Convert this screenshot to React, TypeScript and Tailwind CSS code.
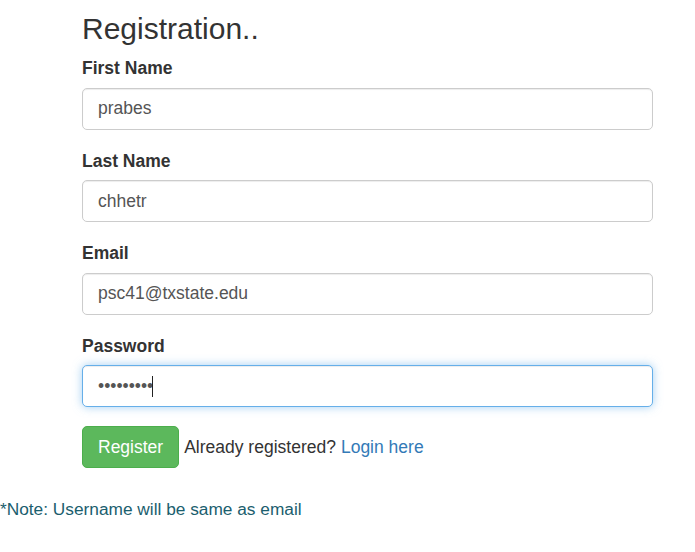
import { useState } from "react";

const inputClass =
    "block w-full h-[42px] px-[15px] text-[17.5px] text-[#555] bg-white border border-[#ccc] rounded-[5px] shadow-[inset_0_1px_1px_rgba(0,0,0,0.075)] outline-none";

function Field({
    label,
    value,
    type = "text",
    focused = false,
}: {
    label: string;
    value: string;
    type?: string;
    focused?: boolean;
}) {
    const [v, setV] = useState(value);
    return (
        <div className="mb-[19px]">
            <label className="block h-[25px] leading-[25px] mb-[6.5px] text-[17.5px] font-bold text-[#333]">{label}</label>
            <div className="relative">
                <input
                    type={type}
                    value={v}
                    onChange={(e) => setV(e.target.value)}
                    className={
                        focused
                            ? "block w-full h-[42px] px-[15px] text-[17.5px] text-[#555] bg-white border border-[#66afe9] rounded-[5px] shadow-[inset_0_1px_1px_rgba(0,0,0,0.075),0_0_10px_rgba(102,175,233,0.6)] outline-none"
                            : inputClass
                    }
                />
                {focused && <span className="absolute left-[70px] top-[11px] w-px h-[21px] bg-[#222]" />}
            </div>
        </div>
    );
}

export default function App() {
    return (
        <div className="w-[695px] h-[552px] bg-white overflow-hidden font-['Liberation_Sans',Arial,sans-serif] text-[#333]">
            <div className="pl-[82px] pr-[42px] pt-[12px]">
                <h3 className="text-[30px] leading-[33px] mb-[11px]">Registration..</h3>
                <form onSubmit={(e) => e.preventDefault()}>
                    <Field label="First Name" value="prabes" />
                    <Field label="Last Name" value="chhetr" />
                    <Field label="Email" value="psc41@txstate.edu" />
                    <Field label="Password" value="123456789" type="password" focused />
                    <div className="flex items-center mt-[1px] text-[17.5px]">
                        <button
                            type="submit"
                            className="h-[42px] px-[15px] bg-[#5cb85c] border border-[#4cae4c] rounded-[5px] text-white text-[17.5px]"
                        >
                            Register
                        </button>
                        <span className="ml-[5px]">Already registered?</span>
                        <a href="#" className="ml-[5px] text-[#337ab7]">
                            Login here
                        </a>
                    </div>
                </form>
            </div>
            <p className="mt-[29px] text-[17.3px] leading-[25px] text-[#1b5e6e]">*Note: Username will be same as email</p>
        </div>
    );
}
